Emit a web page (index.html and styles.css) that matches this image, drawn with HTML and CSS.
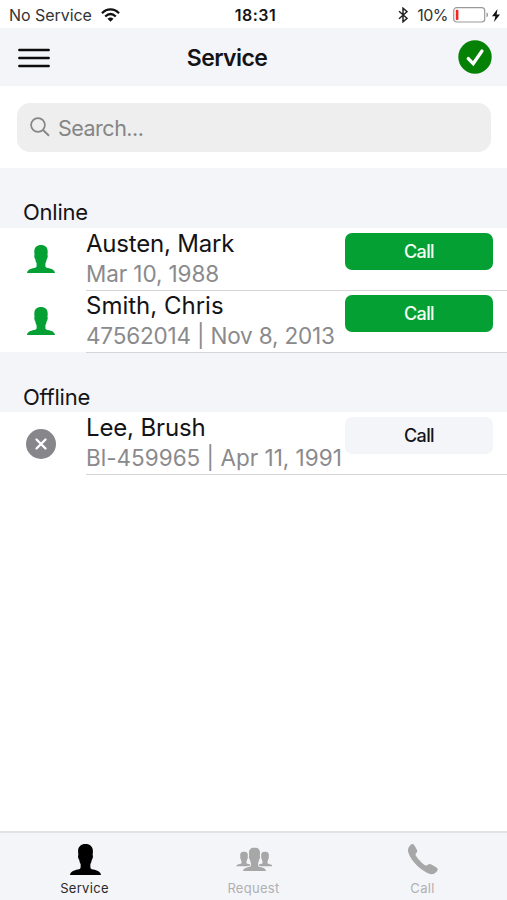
FILE: index.html
```html
<!DOCTYPE html>
<html lang="en">
<head>
<meta charset="utf-8">
<meta name="viewport" content="width=device-width, initial-scale=1">
<title>Service</title>
<link rel="stylesheet" href="styles.css">
</head>
<body>
<svg class="symbols" aria-hidden="true">
  <symbol id="person" viewBox="0 0 28 28" preserveAspectRatio="none">
    <path d="M14 0C9.800 0 7.300 2.400 7.300 6.400c0 1.500.1 2.500.3 3.500-.5.400-.4 1.400-.2 2.200.2 1 .5 1.900 1 2.300.2 1.700.6 2.800 1.200 3.700v2.900c0 1.200-.7 1.700-2.600 2.100C3.500 24 .4 24.800 0 28h28c-.4-3.200-3.500-4-7-4.900-1.900-.4-2.600-.9-2.600-2.100v-2.900c.6-.9 1-2 1.200-3.700.5-.4.8-1.300 1-2.300.2-.8.300-1.800-.2-2.200.2-1 .3-2 .3-3.500C20.700 2.400 18.200 0 14 0z"/>
  </symbol>
</svg>
<div class="screen">
  <div class="status">
    <div class="status-left">
      <span class="carrier">No Service</span>
      <svg class="wifi" viewBox="0 0 19 14"><g fill="none" stroke="#111" stroke-width="2.300"><path d="M1 5.200C6 .2 13 .2 18 5.200"/><path d="M4.200 8.500c3.300-3.100 7.300-3.100 10.600 0"/></g><path d="M6.500 10.800c1.900-1.700 4.100-1.700 6 0l-3 3z" fill="#111"/></svg>
    </div>
    <span class="clock">18:31</span>
    <div class="status-right">
      <svg class="bluetooth" viewBox="0 0 10 16"><path d="M1 4.300l8 7-4 3.500V1.200l4 3.500-8 7" fill="none" stroke="#222" stroke-width="1.500"/></svg>
      <span class="percent">10%</span>
      <svg class="battery" viewBox="0 0 36 16"><rect x=".7" y=".7" width="31" height="14.300" rx="3" fill="#fff" stroke="#999" stroke-width="1.200"/><rect x="2.800" y="2.800" width="2.600" height="10.200" rx=".8" fill="#f5271c"/><path d="M33.500 5.500c2 .4 2 4.300 0 4.700z" fill="#999"/></svg>
      <svg class="bolt" viewBox="0 0 8 13"><path d="M5.500 0L0 7.200h3.400L2 13l6-7.600H4.600z" fill="#111"/></svg>
    </div>
  </div>
  <header class="header">
    <svg class="menu" viewBox="0 0 32 20"><path d="M1.300 2h29.400M1.300 10h29.400M1.300 18h29.400" stroke="#0c0c0e" stroke-width="2.400" stroke-linecap="round"/></svg>
    <h1 class="title">Service</h1>
    <svg class="check" viewBox="0 0 34 34"><circle cx="17" cy="17" r="16.700" fill="#058205"/><path d="M10.300 18.600l4.900 5 8.700-12.500" fill="none" stroke="#fff" stroke-width="3.400" stroke-linecap="round"/></svg>
  </header>
  <div class="search-area">
    <div class="search">
      <svg class="lens" viewBox="0 0 20 20"><circle cx="8" cy="8" r="6.900" fill="none" stroke="#858585" stroke-width="1.700"/><path d="M13 13l6 5.700" stroke="#858585" stroke-width="1.900"/></svg>
      <span class="placeholder">Search...</span>
    </div>
  </div>
  <section>
    <h2 class="group"><span>Online</span></h2>
    <div class="row">
      <svg class="avatar"><use href="#person"/></svg>
      <div class="detail">
        <div class="info"><div class="name name-a">Austen, Mark</div><div class="meta meta-a">Mar 10, 1988</div></div>
        <button class="call">Call</button>
      </div>
    </div>
    <div class="row">
      <svg class="avatar"><use href="#person"/></svg>
      <div class="detail">
        <div class="info"><div class="name">Smith, Chris</div><div class="meta meta-b">47562014 | Nov 8, 2013</div></div>
        <button class="call">Call</button>
      </div>
    </div>
  </section>
  <section>
    <h2 class="group group-offline"><span>Offline</span></h2>
    <div class="row">
      <svg class="cross" viewBox="0 0 30 30"><circle cx="15" cy="15" r="15" fill="#86868b"/><path d="M10.500 10.500l9 9m0-9l-9 9" stroke="#fff" stroke-width="2.300" stroke-linecap="round"/></svg>
      <div class="detail">
        <div class="info"><div class="name name-c">Lee, Brush</div><div class="meta">Bl-459965 | Apr 11, 1991</div></div>
        <button class="call call-off">Call</button>
      </div>
    </div>
  </section>
  <nav class="tabs">
    <div class="tab active">
      <svg class="tab-icon tab-person"><use href="#person"/></svg>
      <span>Service</span>
    </div>
    <div class="tab">
      <svg class="tab-icon" viewBox="0 0 36 32"><use href="#person" x="0" y="8.500" width="16" height="15"/><use href="#person" x="21" y="8.500" width="16" height="15"/><use class="front" href="#person" x="7" y="4.500" width="23" height="23.500"/></svg>
      <span>Request</span>
    </div>
    <div class="tab">
      <svg class="tab-icon phone" viewBox="0 0 32 32"><path d="M3.300 2.300C4.800.7 6.200.7 7.300 2.300l2.500 4.100c.8 1.400.5 2.600-.5 3.700-1 1.100-1 1.800-.2 3 2.100 3.300 5 6.500 8.500 8.800 1.300.9 2.100.9 3.200-.1 1.100-1 2.300-1.100 3.600-.3l4.700 2.800c2 1.200 2.200 2.400.7 4.300-2.100 2.600-5.100 3.200-8.400 1.800C12.700 26.600 4.900 18.800 1.600 10.300.4 7.100.9 4.600 3.300 2.300z"/></svg>
      <span>Call</span>
    </div>
  </nav>
</div>
</body>
</html>
```
FILE: styles.css
```css
* { box-sizing: border-box; }
body { margin: 0; background: #fff; color: #141416; font-family: Inter, "Liberation Sans", sans-serif; }
svg { display: block; flex: none; }
h1, h2 { margin: 0; font-weight: 400; }
.symbols { position: absolute; width: 0; height: 0; }
.screen { width: 507px; height: 900px; display: flex; flex-direction: column; overflow: hidden; }
.status { height: 28px; flex: none; display: grid; grid-template-columns: 1fr auto 1fr; align-items: center; padding: 1px 7px 0 9px; font-size: 16px; line-height: 28px; white-space: nowrap; }
.status-left, .status-right { display: flex; align-items: center; }
.status-left { gap: 9px; }
.status-right { justify-content: flex-end; }
.carrier { color: #333; letter-spacing: -0.05px; }
.wifi { width: 19px; height: 14px; }
.clock { font-weight: 600; font-size: 16px; letter-spacing: 0.5px; padding-left: 2px; }
.bluetooth { width: 10px; height: 16px; margin-right: 9px; }
.percent { color: #333; letter-spacing: -0.5px; margin-right: 5px; }
.battery { width: 36px; height: 16px; margin-right: 3px; }
.bolt { width: 8px; height: 13px; }
.header { height: 58px; flex: none; display: grid; grid-template-columns: 34px 1fr 34px; align-items: center; padding: 0 15px 0 18px; background: #f4f5f9; }
.menu { width: 32px; height: 20px; margin-top: 2px; }
.title { font-size: 23px; font-weight: 600; text-align: center; line-height: 30px; letter-spacing: -0.6px; margin: 1px 56px 0 0; }
.check { width: 34px; height: 34px; }
.search-area { height: 82px; flex: none; padding: 17px 16px 0 17px; }
.search { height: 49px; border-radius: 13px; background: #eee; display: flex; align-items: center; gap: 8px; padding-left: 13px; }
.lens { width: 20px; height: 20px; margin-top: -2px; }
.placeholder { font-size: 21.500px; color: #858585; letter-spacing: -0.5px; }
.group { height: 60px; padding: 29px 0 0 23px; background: #f4f5f9; font-size: 22px; line-height: 31px; letter-spacing: -0.25px; }
.group-offline { padding-top: 30px; }
.row { height: 62px; display: flex; }
.avatar { width: 28px; height: 28px; margin: 17px 31px 0 27px; fill: #05a034; }
.cross { width: 30px; height: 30px; margin: 17px 30px 0 26px; }
.detail { position: relative; flex: 1; display: flex; border-bottom: 1px solid #d5d5d8; height: 63px; }
.info { width: 259px; flex: none; white-space: nowrap; }
.name { font-size: 24px; line-height: 31px; }
.name-a { letter-spacing: -0.2px; }
.name-c { letter-spacing: -0.15px; }
.meta { font-size: 22.500px; line-height: 29px; color: #8a8a8d; }
.meta-a { letter-spacing: -0.1px; }
.meta-b { letter-spacing: -0.18px; }
.call { width: 148px; height: 37px; margin: 5px 0 0; padding: 0; border: 0; border-radius: 7px; background: #05a034; color: #f4fff6; font: 500 18px Inter, sans-serif; letter-spacing: -0.6px; }
.call-off { background: #f4f5f9; color: #141416; }
.tabs { margin-top: auto; height: 69px; flex: none; display: grid; grid-template-columns: repeat(3, 1fr); border-top: 2px solid #e1e2e6; background: #f4f5f9; color: #b0b0b3; }
.tab { display: flex; flex-direction: column; align-items: center; padding-top: 10px; font-size: 13px; line-height: 16px; letter-spacing: 0.3px; }
.tab-icon { width: 36px; height: 32px; margin-bottom: 5px; fill: #a7a7a8; }
.front { stroke: #f4f5f9; stroke-width: 1.800px; paint-order: stroke; }
.phone { width: 32px; }
.tab-person { width: 31px; height: 31px; margin: 1px 0 5px 2px; fill: #000; }
.active { color: #29292b; }
```
